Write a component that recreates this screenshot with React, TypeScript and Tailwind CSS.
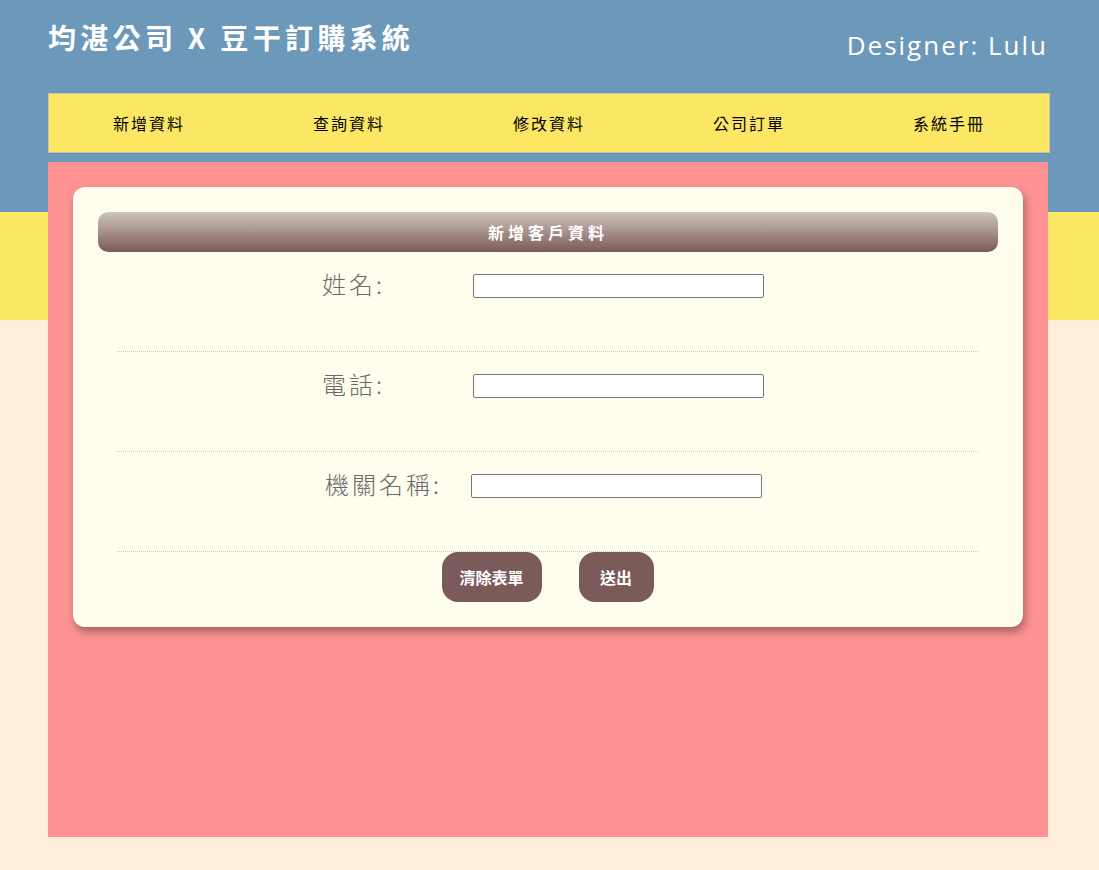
import React from 'react';

const navItems = ['新增資料', '查詢資料', '修改資料', '公司訂單', '系統手冊'];

const cjk = "font-['Noto_Sans_CJK_TC','Noto_Sans',sans-serif]";

function FormRow({ label, labelClass }: { label: string; labelClass: string }) {
  return (
    <div className="h-[100px] border-b border-dotted border-[#c8c6bb] pt-[14px] pl-[205px] flex items-start">
      <label className={`${labelClass} h-[36px] leading-[36px] text-[24px] font-light tracking-[3px] text-[#6a6a6a] whitespace-nowrap`}>
        {label}
      </label>
      <input
        type="text"
        className="mt-[8px] w-[291px] h-[24px] bg-white border border-[#767676] rounded-[2px] outline-none"
      />
    </div>
  );
}

export default function App() {
  return (
    <div
      className={`${cjk} min-h-screen w-full bg-[linear-gradient(to_bottom,#6c98ba_0px,#6c98ba_212px,#fce764_212px,#fce764_320px,#ffeed9_320px)] pb-[33px]`}
    >
      <div className="ml-[48px] w-[1002px]">
        {/* header */}
        <header className="h-[93px] flex justify-between items-start pt-[17px] pr-[2px]">
          <h1 className="text-[28px] leading-[40px] font-bold tracking-[4.3px] text-white">
            均湛公司 X 豆干訂購系統
          </h1>
          <div className="mt-[8px] font-['Open_Sans',sans-serif] text-[26px] leading-[40px] tracking-[2px] text-white">
            Designer: Lulu
          </div>
        </header>

        {/* nav */}
        <nav className="h-[60px] bg-[#fce764] border border-[#c5c2b0] grid grid-cols-5">
          {navItems.map(item => (
            <a key={item} href="#" className="flex items-center justify-center text-[16px] tracking-[2px] text-black">
              {item}
            </a>
          ))}
        </nav>

        {/* main */}
        <main className="mt-[9px] w-[1000px] h-[675px] bg-[#ff9393] p-[25px]">
          <div className="bg-[#fffdee] rounded-[12px] shadow-[2px_5px_8px_rgba(60,40,30,0.45)] p-[25px]">
            <div className="h-[40px] rounded-[10px] bg-[linear-gradient(to_bottom,#cfc5bd,#7c5a59)] flex items-center justify-center text-white font-bold text-[16px] tracking-[4px]">
              新增客戶資料
            </div>
            <form className="mx-[19px] mr-[20px]" onSubmit={e => e.preventDefault()}>
              <FormRow label="姓名:" labelClass="w-[151px]" />
              <FormRow label="電話:" labelClass="w-[151px]" />
              <FormRow label="機關名稱:" labelClass="ml-[3px] w-[146px]" />
              <div className="flex justify-center gap-[37px]">
                <button type="reset" className="w-[100px] h-[50px] rounded-[16px] bg-[#7b5a5a] text-white font-bold text-[16px]">
                  清除表單
                </button>
                <button type="submit" className="w-[75px] h-[50px] rounded-[16px] bg-[#7b5a5a] text-white font-bold text-[16px]">
                  送出
                </button>
              </div>
            </form>
          </div>
        </main>
      </div>
    </div>
  );
}
